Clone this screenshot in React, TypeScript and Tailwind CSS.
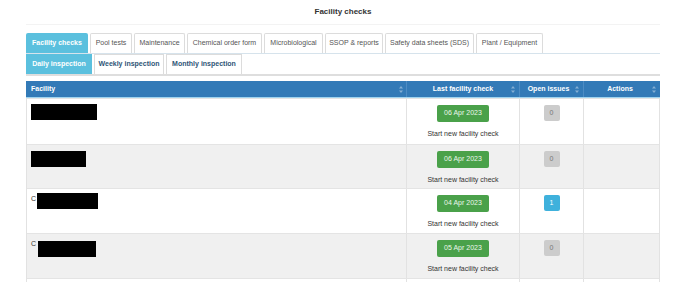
import React from 'react';

const mainTabs = [
  { label: 'Facility checks', w: 'w-[62px]', active: true },
  { label: 'Pool tests', w: 'w-[42px]' },
  { label: 'Maintenance', w: 'w-[51px]' },
  { label: 'Chemical order form', w: 'w-[75px]' },
  { label: 'Microbiological', w: 'w-[59px]' },
  { label: 'SSOP & reports', w: 'w-[58px]' },
  { label: 'Safety data sheets (SDS)', w: 'w-[89px]' },
  { label: 'Plant / Equipment', w: 'w-[67px]' },
];

const subTabs = [
  { label: 'Daily inspection', w: 'w-[66px]', active: true },
  { label: 'Weekly inspection', w: 'w-[70px]' },
  { label: 'Monthly inspection', w: 'w-[76px]' },
];

const rows = [
  { date: '06 Apr 2023', issues: 0, h: 'h-[46px]', bg: 'bg-white', box: 'ml-[4px] mt-[5px] w-[66px]', lead: '', leadTop: '' },
  { date: '06 Apr 2023', issues: 0, h: 'h-[44px]', bg: 'bg-[#f0f0f0]', box: 'ml-[4px] mt-[6px] w-[55px]', lead: '', leadTop: '' },
  { date: '04 Apr 2023', issues: 1, h: 'h-[45px]', bg: 'bg-white', box: 'ml-[1px] mt-[4px] w-[61px]', lead: 'C', leadTop: 'mt-[6px]' },
  { date: '05 Apr 2023', issues: 0, h: 'h-[45px]', bg: 'bg-[#f0f0f0]', box: 'ml-[2px] mt-[7px] w-[58px]', lead: 'C', leadTop: 'mt-[6px]' },
];

const SortIcon = () => (
  <svg width="4" height="7" viewBox="0 0 4 7" className="opacity-40" aria-hidden="true">
    <path d="M2 0L4 2.6H0z" fill="#ffffff" />
    <path d="M2 7L4 4.4H0z" fill="#ffffff" />
  </svg>
);

export default function App() {
  return (
    <div className="w-[674px] h-[282px] overflow-hidden bg-white font-['Liberation_Sans',Arial,sans-serif]">
      <div className="ml-[26px] w-[634px]">
        {/* Title */}
        <div className="h-[25px] flex items-center justify-center border-b border-[#f3f3f3] text-[8px] font-bold text-[#333]">
          Facility checks
        </div>

        {/* Main tabs */}
        <div className="mt-[8px] flex items-end gap-[2px] border-b border-[#d6e3ec]">
          {mainTabs.map((t) => (
            <div
              key={t.label}
              className={`${t.w} h-[20px] flex items-center justify-center rounded-t-[2px] text-[7px] whitespace-nowrap ${
                t.active
                  ? 'bg-[#5bc0de] text-white font-bold'
                  : 'border border-b-0 border-[#dcdcdc] text-[#555]'
              }`}
            >
              {t.label}
            </div>
          ))}
        </div>

        {/* Sub tabs */}
        <div className="flex items-end gap-[2px] border-b-2 border-[#dedede]">
          {subTabs.map((t) => (
            <div
              key={t.label}
              className={`${t.w} h-[20px] flex items-center justify-center text-[7px] font-bold whitespace-nowrap ${
                t.active
                  ? 'bg-[#5bc0de] text-white'
                  : 'border border-b-0 border-[#dcdcdc] text-[#2f5576]'
              }`}
            >
              {t.label}
            </div>
          ))}
        </div>

        {/* Table */}
        <div className="mt-[5px] border-l border-r border-[#e2e2e2]">
          <div className="h-[17px] grid grid-cols-[380px_113px_64px_77px] -mx-px bg-[#337ab7] border-b border-[#9fd3ef] text-[7px] font-bold text-white">
            <div className="flex items-center justify-between pl-[5px] pr-[3px]">
              <span>Facility</span>
              <SortIcon />
            </div>
            <div className="relative flex items-center justify-center border-l border-[#4d8cc4]">
              <span>Last facility check</span>
              <span className="absolute right-[4px] top-[5px]"><SortIcon /></span>
            </div>
            <div className="relative flex items-center justify-center border-l border-[#4d8cc4]">
              <span className="-ml-[6px]">Open issues</span>
              <span className="absolute right-[4px] top-[5px]"><SortIcon /></span>
            </div>
            <div className="relative flex items-center justify-center border-l border-[#4d8cc4]">
              <span className="-ml-[4px]">Actions</span>
              <span className="absolute right-[4px] top-[5px]"><SortIcon /></span>
            </div>
          </div>

          {rows.map((r, i) => (
            <div
              key={i}
              className={`${r.h} ${r.bg} grid grid-cols-[379px_113px_64px_76px] border-t border-[#e4e4e4] first:border-t-0`}
            >
              <div className="flex items-start">
                {r.lead && (
                  <span className={`${r.leadTop} ml-[4px] text-[7px] leading-none text-[#333]`}>{r.lead}</span>
                )}
                <div className={`${r.box} h-[16px] bg-black`} />
              </div>
              <div className="flex flex-col items-center border-l border-[#e2e2e2]">
                <div className="mt-[6px] w-[52px] h-[17px] flex items-center justify-center rounded-[2px] bg-[#4aa14a] text-[7px] text-[#eaf6ea]">
                  {r.date}
                </div>
                <div className="mt-[7px] text-[7px] text-[#333]">Start new facility check</div>
              </div>
              <div className="flex justify-center border-l border-[#e2e2e2]">
                <div
                  className={`mt-[6px] w-[16px] h-[16px] flex items-center justify-center rounded-[2px] text-[7px] ${
                    r.issues > 0 ? 'bg-[#3fb1dc] text-white' : 'bg-[#cccccc] text-[#777]'
                  }`}
                >
                  {r.issues}
                </div>
              </div>
              <div className="border-l border-[#e2e2e2]" />
            </div>
          ))}

          {/* next row, only its top edge is in view */}
          <div className="h-[10px] bg-white grid grid-cols-[379px_113px_64px_76px] border-t border-[#e4e4e4]">
            <div />
            <div className="flex justify-center border-l border-[#e2e2e2]">
              <div className="mt-[3px] w-[52px] h-[7px] rounded-t-[2px] bg-[#4aa14a]" />
            </div>
            <div className="flex justify-center border-l border-[#e2e2e2]">
              <div className="mt-[3px] w-[16px] h-[7px] rounded-t-[2px] bg-[#cccccc]" />
            </div>
            <div className="border-l border-[#e2e2e2]" />
          </div>
        </div>
      </div>
    </div>
  );
}
